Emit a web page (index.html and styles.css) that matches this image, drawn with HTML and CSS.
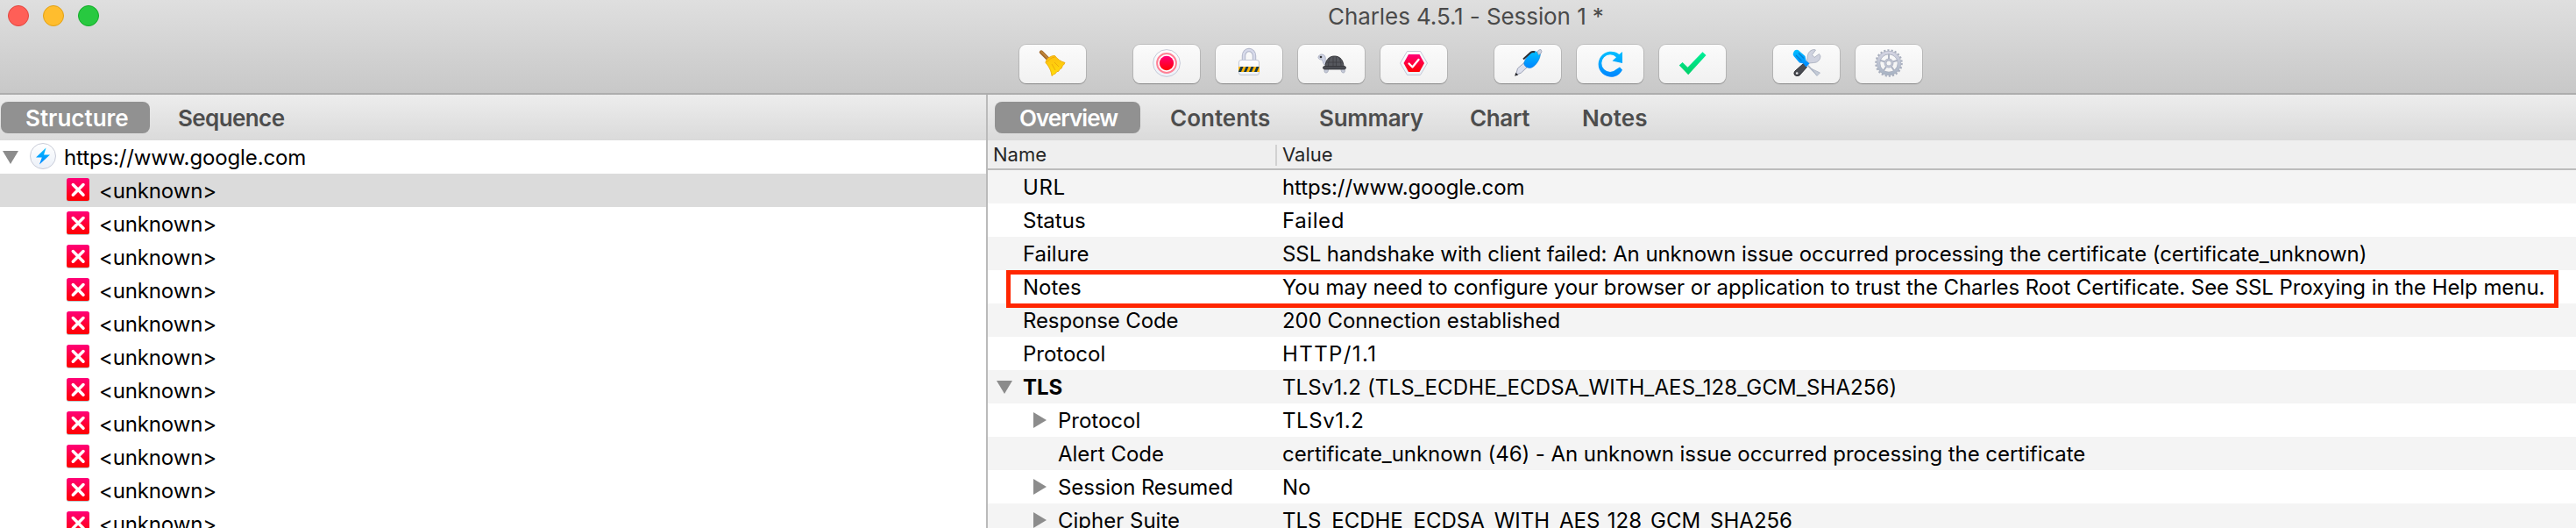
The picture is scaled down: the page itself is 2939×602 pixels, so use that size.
FILE: index.html
```html
<!DOCTYPE html>
<html lang="en">
<head>
<meta charset="utf-8">
<title>Charles 4.5.1 - Session 1 *</title>
<link rel="stylesheet" href="styles.css">
</head>
<body>
<svg class="defs" width="0" height="0">
  <defs>
    <linearGradient id="red" x1="0" y1="0" x2="0" y2="1"><stop offset="0" stop-color="#ff0078"/><stop offset="1" stop-color="#ff0000"/></linearGradient>
    <linearGradient id="blue" x1="0" y1="0" x2="0" y2="1"><stop offset="0" stop-color="#00bfff"/><stop offset="1" stop-color="#0086ff"/></linearGradient>
    <linearGradient id="green" x1="0" y1="0" x2="0" y2="1"><stop offset="0" stop-color="#00f09a"/><stop offset="1" stop-color="#00cf68"/></linearGradient>
    <linearGradient id="pale" x1="0" y1="0" x2="0" y2="1"><stop offset="0" stop-color="#ffffff"/><stop offset="1" stop-color="#ebf0f8"/></linearGradient>
    <linearGradient id="steel" x1="0" y1="0" x2="0" y2="1"><stop offset="0" stop-color="#d3d4e2"/><stop offset="1" stop-color="#a9b4c4"/></linearGradient>
    <linearGradient id="straw" x1="0" y1="0" x2="0" y2="1"><stop offset="0" stop-color="#fdc010"/><stop offset="1" stop-color="#ffdd0a"/></linearGradient>
    <symbol id="fail" viewBox="0 0 26 27">
      <rect x="0" y="1" width="26" height="26" rx="2.5" fill="#b9c9cc"/>
      <rect width="26" height="26" rx="2.5" fill="url(#red)"/>
      <path d="M7.3 7.500 19 19.200M19 7.500 7.300 19.200" stroke="#fff" stroke-width="3.500" stroke-linecap="round"/>
    </symbol>
  </defs>
</svg>

<div class="window">
  <header class="titlebar">
    <div class="title-row">
      <div class="lights"><i class="light close"></i><i class="light minimise"></i><i class="light expand"></i></div>
      <div class="title">Charles 4.5.1 - Session 1 *</div>
    </div>
    <div class="toolbar">
      <div class="group">
        <button class="tool"><svg width="76" height="44" viewBox="0 0 76 44">
          <path d="M25 8.500 33.500 17" stroke="#a4692a" stroke-width="4.400" stroke-linecap="round"/>
          <path d="M25 8 33 16" stroke="#c48a3c" stroke-width="1.500" stroke-linecap="round"/>
          <path d="M30 20.500C30 16.500 36 12 40.500 12.500 43.500 16.500 47 19 52 20.500L50.500 23 49.500 23.500 48 27 46.500 27.500 44.500 30.500 43 30.500 40.500 33.500 39.500 33.500 37 35.500C36.500 30.500 34.500 25.500 30 20.500Z" fill="url(#straw)" stroke="#eda90a" stroke-width=".9"/>
          <path d="M31.500 20C34 16.500 37 14.500 40.500 14M37 22 41 29M40 20 45 25" fill="none" stroke="#eaa10b" stroke-width=".8"/>
        </svg></button>
      </div>
      <div class="group">
        <button class="tool"><svg width="76" height="44" viewBox="0 0 76 44">
          <circle cx="38" cy="21" r="15.400" fill="url(#pale)" stroke="#c6cad8"/>
          <circle cx="38" cy="21" r="10.900" fill="#fff" stroke="#ff8296" stroke-width="2"/>
          <circle cx="38" cy="21" r="8.200" fill="url(#red)"/>
        </svg></button>
        <button class="tool"><svg width="76" height="44" viewBox="0 0 76 44">
          <path d="M32 18V12.500a6 6.500 0 0 1 12 0V18" fill="none" stroke="#aeb3c6" stroke-width="4.400"/>
          <path d="M32 18V12.500a6 6.500 0 0 1 12 0V18" fill="none" stroke="#d7daea" stroke-width="2.600"/>
          <rect x="26.500" y="17.500" width="23" height="17" rx="2.500" fill="url(#pale)" stroke="#c3c8d6"/>
          <path d="M26 25h24v6H26z" fill="#ffb300"/>
          <path d="M28.500 25h3l-2.500 6h-3v-.5zM34.500 25h3L35 31h-3zM40.500 25h3L41 31h-3zM46.500 25h3L47 31h-3z" fill="#12384b"/>
        </svg></button>
        <button class="tool"><svg width="76" height="44" viewBox="0 0 76 44">
          <path d="M23 14.500a4 4 0 0 1 4.500-3.500c3 .3 4 3 3.700 5.500-.2 2.500 0 3.500 1 5l-2 1.500c-2-2-1.700-4.500-3-6-2 0-4-.5-4.200-2.500Z" fill="#ced3e4" stroke="#a9aec0" stroke-width=".9"/>
          <circle cx="26" cy="14" r="1.300" fill="#333"/>
          <path d="M30.500 27.500h4c0 3-.7 4.500-2.500 4.500s-2.500-1-1.500-4.500ZM49 27.500h4c1 3.500 0 4.500-1.500 4.500s-2.500-1.500-2.500-4.500Z" fill="#c5cad8" stroke="#9fa5b5" stroke-width=".8"/>
          <path d="M31 25.500C31 18 35 13 41.500 13S52 18 52 25.500Z" fill="#56585e" stroke="#36373b"/>
          <path d="M36.500 14.500c-1.500 3-2 7-2 10.500M40 13.500V25M43.500 13.500V25M47 15c1.500 3 2 6.500 2 10M32 20h19" fill="none" stroke="#3c3d42" stroke-width=".8"/>
          <rect x="28.500" y="24.500" width="26" height="3.500" rx="1.700" fill="#4a4c52" stroke="#323337" stroke-width=".8"/>
        </svg></button>
        <button class="tool"><svg width="76" height="44" viewBox="0 0 76 44">
          <path d="M30.500 7.500h15L53.500 21l-8 13.500h-15L22.500 21Z" fill="url(#pale)" stroke="#c3c8d6"/>
          <path d="M32 11h12.500L50 21l-5.500 10H32l-5.500-10Z" fill="url(#red)"/>
          <path d="m32.500 21.500 4 4 7-8.500" fill="none" stroke="#fff" stroke-width="2.300" stroke-linecap="round" stroke-linejoin="round"/>
        </svg></button>
      </div>
      <div class="group">
        <button class="tool"><svg width="76" height="44" viewBox="0 0 76 44">
          <path d="M24.500 34.500 26.500 27 34.500 20 38.500 24.500 30.500 32Z" fill="#dcdfec" stroke="#9ba1b5"/>
          <path d="M23.200 35.700 24.300 31.800 27.200 34.500Z" fill="#25262a"/>
          <path d="M46 7.500 52.500 9.500C52.500 17 46 26 40.500 26.500 36.500 26.500 33 23.500 34 20 36 14.500 40.500 9 46 7.500Z" fill="url(#blue)" stroke="#057bd6" stroke-width=".6"/>
          <path d="M33 16.500 41.500 8.800Q43 7.700 46 8.300" fill="none" stroke="#2b2d32" stroke-width="2"/>
          <path d="M49 8.500Q50 5 53 5.500 55 7.500 53 10L50.500 11.500Z" fill="#cfd2df" stroke="#9ba1b5" stroke-width=".8"/>
        </svg></button>
        <button class="tool"><svg width="76" height="44" viewBox="0 0 76 44">
          <path d="M52 8v13l-11.500-2.500 4.500-4.300A9.800 9.800 0 1 0 45 28l4-2.500 3 3.300A14.500 14.500 0 1 1 48.300 11Z" fill="url(#blue)"/>
        </svg></button>
        <button class="tool"><svg width="76" height="44" viewBox="0 0 76 44">
          <path d="M22.800 23.500 26.600 20 32.500 25.700 49.500 8.300 53.500 12 33.200 34.300Z" fill="url(#green)"/>
        </svg></button>
      </div>
      <div class="group">
        <button class="tool"><svg width="76" height="44" viewBox="0 0 76 44">
          <path d="M39.500 23.500 50 34.500" stroke="#a8b1c1" stroke-width="1.800"/>
          <path d="M44 27.500 53.500 32 50 35.500Z" fill="#c3cad6" stroke="#a8b1c1" stroke-width=".8"/>
          <path d="M48.500 6 44.500 11.500 47 14.500 52.500 10.500 54 13A7.500 7.500 0 0 1 46.500 20.500L41 21 38.500 18.500 39.500 12A7.500 7.500 0 0 1 47 5.500Z" fill="#cfd2df" stroke="#a5abba" stroke-width=".8"/>
          <path d="M34.500 21.500 38.500 25.500 30 35Q26.500 36.500 24.500 34.500 23 32 25 30Z" fill="#494b51" stroke="#303136"/>
          <circle cx="27.200" cy="32.500" r="1.300" fill="#e8e8ea"/>
          <path d="M23.500 8Q25 5 28.500 6L36.500 13 37.500 18 41.500 21.500 37.500 25.500 34.500 21.500 30 20.500 23.500 13Q22 10.500 23.500 8Z" fill="url(#blue)"/>
          <path d="M26 12 32.500 18.500M29 9.500 35 15.500" stroke="#067fd0" stroke-width="1.100"/>
        </svg></button>
        <button class="tool"><svg width="76" height="44" viewBox="0 0 76 44">
          <circle cx="38" cy="21" r="14.700" fill="none" stroke="#a9afbe" stroke-width="2.200" stroke-dasharray="2.200 1.999"/>
          <circle cx="38" cy="21" r="11.900" fill="none" stroke="#a6acbb" stroke-width="4.200"/>
          <circle cx="38" cy="21" r="12" fill="none" stroke="url(#steel)" stroke-width="3.200"/>
          <path d="M38 16V10.500M42.800 19.400 48 17.700M41 25.100 44.200 29.500M35 25.100 31.800 29.500M33.200 19.400 28 17.700" stroke="#adb3c2" stroke-width="2"/>
          <circle cx="38" cy="21" r="4" fill="none" stroke="#a6acbb" stroke-width="2.800"/>
          <circle cx="38" cy="21" r="4" fill="none" stroke="#c2c6d4" stroke-width="1.600"/>
        </svg></button>
      </div>
    </div>
  </header>

  <main class="panes">
    <section class="sidebar">
      <nav class="tabs tabs-left">
        <span class="tab tab-structure active">Structure</span>
        <span class="tab tab-sequence">Sequence</span>
      </nav>
      <div class="tree">
        <div class="host">
          <svg class="arrow" width="18" height="15" viewBox="0 0 18 15"><path d="M0 0h18L9 15Z" fill="#8c8c8c"/></svg>
          <svg class="bolt" width="32" height="32" viewBox="0 0 32 32">
            <circle cx="16" cy="16" r="14.500" fill="url(#pale)" stroke="#c9ccd8"/>
            <path d="M19.500 6.500 8 17.500h6.800L12 25.500 24 14.500h-7Z" fill="url(#blue)"/>
          </svg>
          <span class="host-name">https://www.google.com</span>
        </div>
        <div class="node selected"><svg width="26" height="27"><use href="#fail"/></svg>&lt;unknown&gt;</div>
        <div class="node"><svg width="26" height="27"><use href="#fail"/></svg>&lt;unknown&gt;</div>
        <div class="node"><svg width="26" height="27"><use href="#fail"/></svg>&lt;unknown&gt;</div>
        <div class="node"><svg width="26" height="27"><use href="#fail"/></svg>&lt;unknown&gt;</div>
        <div class="node"><svg width="26" height="27"><use href="#fail"/></svg>&lt;unknown&gt;</div>
        <div class="node"><svg width="26" height="27"><use href="#fail"/></svg>&lt;unknown&gt;</div>
        <div class="node"><svg width="26" height="27"><use href="#fail"/></svg>&lt;unknown&gt;</div>
        <div class="node"><svg width="26" height="27"><use href="#fail"/></svg>&lt;unknown&gt;</div>
        <div class="node"><svg width="26" height="27"><use href="#fail"/></svg>&lt;unknown&gt;</div>
        <div class="node"><svg width="26" height="27"><use href="#fail"/></svg>&lt;unknown&gt;</div>
        <div class="node"><svg width="26" height="27"><use href="#fail"/></svg>&lt;unknown&gt;</div>
      </div>
    </section>

    <section class="detail">
      <nav class="tabs tabs-right">
        <span class="tab tab-overview active">Overview</span>
        <span class="tab tab-contents">Contents</span>
        <span class="tab tab-summary">Summary</span>
        <span class="tab tab-chart">Chart</span>
        <span class="tab tab-notes">Notes</span>
      </nav>
      <div class="columns"><span class="column-name">Name</span><span class="column-value">Value</span></div>
      <div class="rows">
        <div class="row"><span class="name wide">URL</span><span class="value tight">https://www.google.com</span></div>
        <div class="row"><span class="name">Status</span><span class="value wide">Failed</span></div>
        <div class="row"><span class="name">Failure</span><span class="value snug">SSL handshake with client failed: An unknown issue occurred processing the certificate (certificate_unknown)</span></div>
        <div class="row highlighted"><span class="name">Notes</span><span class="value snug">You may need to configure your browser or application to trust the Charles Root Certificate. See SSL Proxying in the Help menu.</span></div>
        <div class="row"><span class="name tight">Response Code</span><span class="value close-set">200 Connection established</span></div>
        <div class="row"><span class="name">Protocol</span><span class="value wider">HTTP/1.1</span></div>
        <div class="row"><span class="name group-name"><svg class="arrow" width="18" height="15" viewBox="0 0 18 15"><path d="M0 0h18L9 15Z" fill="#8c8c8c"/></svg>TLS</span><span class="value loose">TLSv1.2 (TLS_ECDHE_ECDSA_WITH_AES_128_GCM_SHA256)</span></div>
        <div class="row"><span class="name child"><svg class="arrow" width="15" height="18" viewBox="0 0 15 18"><path d="M0 0v18L15 9Z" fill="#8c8c8c"/></svg>Protocol</span><span class="value wide">TLSv1.2</span></div>
        <div class="row"><span class="name leaf">Alert Code</span><span class="value close-set">certificate_unknown (46) - An unknown issue occurred processing the certificate</span></div>
        <div class="row"><span class="name child tight"><svg class="arrow" width="15" height="18" viewBox="0 0 15 18"><path d="M0 0v18L15 9Z" fill="#8c8c8c"/></svg>Session Resumed</span><span class="value">No</span></div>
        <div class="row"><span class="name child"><svg class="arrow" width="15" height="18" viewBox="0 0 15 18"><path d="M0 0v18L15 9Z" fill="#8c8c8c"/></svg>Cipher Suite</span><span class="value">TLS_ECDHE_ECDSA_WITH_AES_128_GCM_SHA256</span></div>
      </div>
    </section>
  </main>
</div>
</body>
</html>
```
FILE: styles.css
```css
*, *::after { box-sizing: border-box; }
body { margin: 0; overflow: hidden; background: #fff; color: #000; font: 24px/40px Inter, "Liberation Sans", sans-serif; white-space: nowrap; }
svg { display: block; flex: none; }
.defs { position: absolute; }

.window { display: flex; flex-direction: column; height: 602px; overflow: hidden; }

.titlebar { flex: none; height: 108px; border-bottom: 2px solid #adadad; background: linear-gradient(#dfdfdf, #c8c8c8); }
.title-row { display: grid; grid-template-columns: 1515px auto; height: 36px; }
.lights { display: flex; gap: 16px; padding: 6px 0 0 9px; }
.light { width: 24px; height: 24px; border-radius: 50%; border: 1px solid; }
.close { background: #ff5f57; border-color: #e2463f; }
.minimise { background: #ffbd2e; border-color: #e1a116; }
.expand { background: #28c940; border-color: #12ac28; }
.title { color: #4a4a4a; font-size: 26px; line-height: 38px; letter-spacing: -.08px; }
.toolbar { display: flex; gap: 54px; padding: 15px 0 0 1163px; }
.group { display: flex; gap: 18px; }
.tool { width: 76px; height: 44px; padding: 0; border: 0; border-radius: 8px; background: linear-gradient(#fbfbfb, #f1f1f1); box-shadow: 0 0 0 1px rgba(0, 0, 0, .1), 0 1px 1px rgba(0, 0, 0, .25); }

.panes { display: grid; grid-template-columns: 1125px 1fr; flex: 1; min-height: 0; }
.detail { border-left: 2px solid #bababa; min-width: 0; }

.tabs { display: flex; height: 52px; padding: 8px 0; background: linear-gradient(#ededed, #dadada); }
.tabs-left { padding-left: 1px; }
.tabs-right { padding-left: 8px; }
.tab { flex: none; height: 36px; border-radius: 8px; color: #4d4d4d; font-size: 26px; font-weight: 600; line-height: 38px; }
.active { background: #919191; color: #fff; }
.tab-structure { width: 170px; padding-left: 28px; }
.tab-sequence { padding-left: 32px; letter-spacing: -.6px; }
.tab-overview { width: 166px; padding-left: 28px; letter-spacing: -.95px; }
.tab-contents { width: 170px; padding-left: 34px; }
.tab-summary { width: 173px; padding-left: 34px; letter-spacing: -.25px; }
.tab-chart { width: 128px; padding-left: 33px; letter-spacing: -.4px; }
.tab-notes { padding-left: 33px; letter-spacing: .1px; }

.host { display: flex; height: 38px; padding-left: 3px; }
.host .arrow { margin: 12px 12px 0 0; }
.bolt { margin: 2px 8px 0 0; }
.host-name { letter-spacing: -.13px; }
.node { display: flex; height: 38px; padding-left: 76px; gap: 11px; letter-spacing: -.15px; }
.node svg { margin-top: 5px; }
.selected { background: #dbdbdb; }

.columns { display: flex; height: 34px; padding: 0 0 0 6px; border-bottom: 2px solid #bcbcbc; background: #efefef; color: #262626; font-size: 22px; line-height: 32px; }
.column-name { width: 322px; }
.column-value { height: 24px; margin-top: 5px; padding-left: 6px; border-left: 2px solid #d2d2d2; line-height: 22px; }

.row { position: relative; display: grid; grid-template-columns: 336px 1fr; height: 38px; }
.row:nth-child(odd) { background: #f4f4f4; }
.name { display: flex; padding-left: 40px; }
.group-name { padding-left: 10px; font-weight: 700; }
.group-name .arrow { margin: 12px 12px 0 0; }
.child { padding-left: 52px; }
.child .arrow { margin: 10px 13px 0 0; }
.leaf { padding-left: 80px; }
.tight { letter-spacing: -.12px; }
.snug { letter-spacing: -.075px; }
.close-set { letter-spacing: -.06px; }
.loose { letter-spacing: .12px; }
.wide { letter-spacing: .6px; }
.wider { letter-spacing: 1.4px; }
.highlighted::after { content: ""; position: absolute; z-index: 1; top: 0; left: 21px; width: 1771px; height: 43px; border: 5px solid #ff2600; }
```
